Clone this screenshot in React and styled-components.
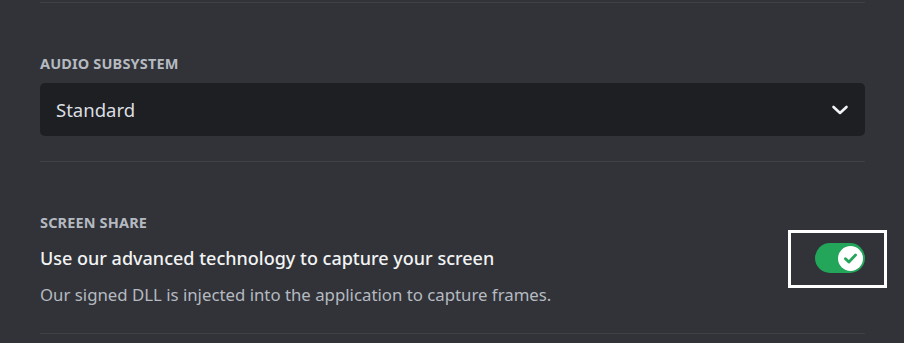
import React from 'react';
import styled, { createGlobalStyle } from 'styled-components';

const GlobalStyle = createGlobalStyle`
  body {
    margin: 0;
    background: #313338;
    font-family: "Noto Sans", "Open Sans", sans-serif;
  }
`;

const Page = styled.main`
  padding: 2px 39px 0 40px;
`;

const Divider = styled.div`
  height: 1px;
  background: #3f4147;
`;

const Section = styled.section`
  padding: 50px 0 ${(p) => p.$bottom || 25}px;
`;

const Label = styled.h3`
  margin: 0 0 10px;
  font-size: 14.5px;
  line-height: 20px;
  font-weight: 700;
  letter-spacing: 0.01em;
  text-transform: uppercase;
  color: #b5bac1;
`;

const Select = styled.div`
  display: flex;
  align-items: center;
  justify-content: space-between;
  height: 53px;
  padding: 0 16px;
  box-sizing: border-box;
  background: #1e1f22;
  border-radius: 5px;
  color: #dbdee1;
  font-size: 18.5px;
`;

const Row = styled.div`
  display: flex;
  justify-content: space-between;
  align-items: flex-start;
  margin-top: 14px;
`;

const Info = styled.div`
  display: flex;
  flex-direction: column;
  gap: 14px;
`;

const Title = styled.div`
  font-size: 18px;
  line-height: 24px;
  font-weight: 500;
  color: #f2f3f5;
`;

const Note = styled.div`
  font-size: 16.8px;
  line-height: 22px;
  color: #b5bac1;
`;

const ToggleFrame = styled.div`
  position: relative;
  margin-top: -3px;
  &::after {
    content: '';
    position: absolute;
    top: -13px;
    left: -27px;
    right: -22px;
    bottom: -15px;
    border: 3px solid #ffffff;
  }
`;

const Switch = styled.div`
  display: flex;
  align-items: center;
  justify-content: ${(p) => (p.$on ? 'flex-end' : 'flex-start')};
  width: 50px;
  height: 30px;
  padding: 0 2px;
  box-sizing: border-box;
  border-radius: 15px;
  background: ${(p) => (p.$on ? '#23a55a' : '#80848e')};
`;

const Knob = styled.div`
  display: flex;
  align-items: center;
  justify-content: center;
  width: 25px;
  height: 25px;
  border-radius: 50%;
  background: #ffffff;
`;

const Chevron = () => (
  <svg width="18" height="18" viewBox="0 0 18 18" fill="none">
    <path d="M2.5 6 L9 12 L15.5 6" stroke="#f2f3f5" strokeWidth="2.6" strokeLinecap="round" strokeLinejoin="round" />
  </svg>
);

const Check = () => (
  <svg width="15" height="15" viewBox="0 0 14 14" fill="none">
    <path d="M2.3 7.2 L5.5 10.3 L11.7 3.8" stroke="#23a55a" strokeWidth="2.6" strokeLinecap="round" strokeLinejoin="round" />
  </svg>
);

export default function App() {
  return (
    <>
      <GlobalStyle />
      <Page>
        <Divider />
        <Section>
          <Label>Audio Subsystem</Label>
          <Select>
            <span>Standard</span>
            <Chevron />
          </Select>
        </Section>
        <Divider />
        <Section $bottom={27}>
          <Label>Screen Share</Label>
          <Row>
            <Info>
              <Title>Use our advanced technology to capture your screen</Title>
              <Note>Our signed DLL is injected into the application to capture frames.</Note>
            </Info>
            <ToggleFrame>
              <Switch $on>
                <Knob>
                  <Check />
                </Knob>
              </Switch>
            </ToggleFrame>
          </Row>
        </Section>
        <Divider />
      </Page>
    </>
  );
}
